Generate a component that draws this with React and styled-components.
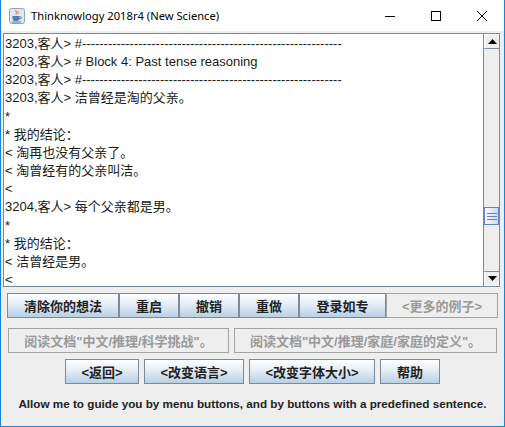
import React from "react"
import styled, { createGlobalStyle } from "styled-components"

const GlobalStyle = createGlobalStyle`
  html, body {
    margin: 0;
    padding: 0;
    background: #ffffff;
  }
`

const CJK = `"Liberation Sans", "Noto Sans CJK SC", sans-serif`

const Window = styled.div`
  width: 505px;
  height: 427px;
  box-sizing: border-box;
  border: 1px solid #1883d7;
  border-top: none;
  display: flex;
  flex-direction: column;
  background: #eeeeee;
  overflow: hidden;
`

const TitleBar = styled.div`
  height: 31px;
  flex: none;
  background: #ffffff;
  display: flex;
  align-items: center;
  margin-right: -1px;
`

const AppIcon = styled.div`
  width: 16px;
  height: 16px;
  margin: 0 6px 0 8px;
  display: flex;
`

const Title = styled.div`
  flex: 1;
  font-family: "Noto Sans", "Open Sans", sans-serif;
  font-size: 11.2px;
  color: #000000;
  padding-bottom: 1px;
`

const Control = styled.div`
  width: 46px;
  height: 31px;
  display: flex;
  align-items: center;
  justify-content: center;
`

const Body = styled.div`
  flex: 1;
  display: flex;
  flex-direction: column;
  padding: 2px 4px 0 2px;
`

const ScrollPane = styled.div`
  height: 254px;
  box-sizing: border-box;
  border: 1px solid #7a8a99;
  display: flex;
  background: #ffffff;
`

const TextArea = styled.div`
  flex: 1;
  padding: 1px 0 0 1px;
  overflow: hidden;
  font-family: ${CJK};
  font-size: 13px;
  line-height: 18.15px;
  color: #1a1a1a;
  white-space: pre;
`

const ScrollBar = styled.div`
  width: 16px;
  box-sizing: border-box;
  border-left: 1px solid #7a8a99;
  background: #eeeeee;
  display: flex;
  flex-direction: column;
`

const ArrowButton = styled.div`
  height: 15px;
  flex: none;
  box-sizing: border-box;
  border: 1px solid #ffffff;
  border-bottom-color: ${(p) => (p.down ? "#ffffff" : "#7a8a99")};
  border-top-color: ${(p) => (p.down ? "#7a8a99" : "#ffffff")};
  border-right: none;
  background: #eeeeee;
  display: flex;
  align-items: center;
  justify-content: center;
`

const Track = styled.div`
  flex: 1;
  display: flex;
  flex-direction: column;
  padding-top: ${(p) => p.offset}px;
`

const Thumb = styled.div`
  height: 18px;
  box-sizing: border-box;
  border: 1px solid #6382bf;
  background: linear-gradient(to right, #ffffff, #c8d9ee);
  display: flex;
  flex-direction: column;
  align-items: center;
  justify-content: center;
  gap: 2px;
`

const Grip = styled.div`
  width: 10px;
  height: 1px;
  background: #6382bf;
`

const Row = styled.div`
  display: flex;
  justify-content: ${(p) => p.justify || "flex-start"};
  gap: ${(p) => p.gap || 0}px;
  margin-top: ${(p) => p.top}px;
  padding-left: ${(p) => p.left || 0}px;
`

const Button = styled.div`
  width: ${(p) => p.w}px;
  height: 25px;
  box-sizing: border-box;
  flex: none;
  border: 1px solid ${(p) => (p.disabled ? "#a3a3a3" : "#7a8a99")};
  background: ${(p) =>
    p.disabled
      ? "#eeeeee"
      : "linear-gradient(to bottom, #ffffff 0%, #e4edf6 45%, #b8cfe5 100%)"};
  color: ${(p) => (p.disabled ? "#9a9a9a" : "#222222")};
  font-family: ${CJK};
  font-weight: bold;
  font-size: 13px;
  display: flex;
  align-items: center;
  justify-content: center;
  white-space: nowrap;
`

const Footer = styled.div`
  margin-top: 13px;
  text-align: center;
  font-family: "Liberation Sans", Arial, sans-serif;
  font-weight: bold;
  font-size: 11.7px;
  color: #222222;
  padding-left: 2px;
`

const dashes = "#" + "-".repeat(60)

const lines = [
  `3203,客人> ${dashes}`,
  "3203,客人> # Block 4: Past tense reasoning",
  `3203,客人> ${dashes}`,
  "3203,客人> 洁曾经是淘的父亲。",
  "*",
  "* 我的结论：",
  "< 淘再也没有父亲了。",
  "< 淘曾经有的父亲叫洁。",
  "<",
  "3204,客人> 每个父亲都是男。",
  "*",
  "* 我的结论：",
  "< 洁曾经是男。",
  "<",
]

const JavaIcon = () => (
  <svg width="16" height="16" viewBox="0 0 16 16">
    <rect x="0.5" y="0.5" width="15" height="15" rx="2" fill="#dfe6ee" stroke="#8ea3ba" />
    <path d="M7 2c-1 1.5 1.5 2.5 0 4.5M9 3c-1 1 1 2 0 3" stroke="#e0782a" fill="none" strokeWidth="1" />
    <path d="M3.5 8h7v2.5c0 1.5-1 2.5-2.5 2.5h-2c-1.5 0-2.5-1-2.5-2.5z" fill="#4f7fb0" />
    <path d="M10.5 8.8h1.2c1 0 1 2-0.5 2h-0.7" stroke="#4f7fb0" fill="none" />
    <rect x="3" y="13.5" width="9" height="1" fill="#4f7fb0" />
  </svg>
)

export default function App() {
  return (
    <>
      <GlobalStyle />
      <Window>
        <TitleBar>
          <AppIcon>
            <JavaIcon />
          </AppIcon>
          <Title>Thinknowlogy 2018r4 (New Science)</Title>
          <Control>
            <svg width="10" height="10" viewBox="0 0 10 10">
              <rect x="0" y="5" width="10" height="1" fill="#000" />
            </svg>
          </Control>
          <Control>
            <svg width="10" height="10" viewBox="0 0 10 10">
              <rect x="0.5" y="0.5" width="9" height="9" fill="none" stroke="#000" />
            </svg>
          </Control>
          <Control>
            <svg width="10" height="10" viewBox="0 0 10 10">
              <path d="M0 0L10 10M10 0L0 10" stroke="#000" strokeWidth="1" />
            </svg>
          </Control>
        </TitleBar>
        <Body>
          <ScrollPane>
            <TextArea>
              {lines.map((l, i) => (
                <div key={i}>{l}</div>
              ))}
            </TextArea>
            <ScrollBar>
              <ArrowButton>
                <svg width="9" height="5" viewBox="0 0 9 5">
                  <path d="M4.5 0L9 5H0z" fill="#000" />
                </svg>
              </ArrowButton>
              <Track offset={158}>
                <Thumb>
                  <Grip />
                  <Grip />
                  <Grip />
                </Thumb>
              </Track>
              <ArrowButton down>
                <svg width="9" height="5" viewBox="0 0 9 5">
                  <path d="M0 0H9L4.5 5z" fill="#000" />
                </svg>
              </ArrowButton>
            </ScrollBar>
          </ScrollPane>
          <Row top={6} left={4}>
            <Button w={112}>清除你的想法</Button>
            <Button w={60}>重启</Button>
            <Button w={60}>撤销</Button>
            <Button w={60}>重做</Button>
            <Button w={87}>登录如专</Button>
            <Button w={112} disabled>&lt;更多的例子&gt;</Button>
          </Row>
          <Row top={10} left={5} gap={5}>
            <Button w={221} disabled>阅读文档"中文/推理/科学挑战"。</Button>
            <Button w={263} disabled>阅读文档"中文/推理/家庭/家庭的定义"。</Button>
          </Row>
          <Row top={6} left={62} gap={5}>
            <Button w={74}>&lt;返回&gt;</Button>
            <Button w={100}>&lt;改变语言&gt;</Button>
            <Button w={126}>&lt;改变字体大小&gt;</Button>
            <Button w={60}>帮助</Button>
          </Row>
          <Footer>Allow me to guide you by menu buttons, and by buttons with a predefined sentence.</Footer>
        </Body>
      </Window>
    </>
  )
}
